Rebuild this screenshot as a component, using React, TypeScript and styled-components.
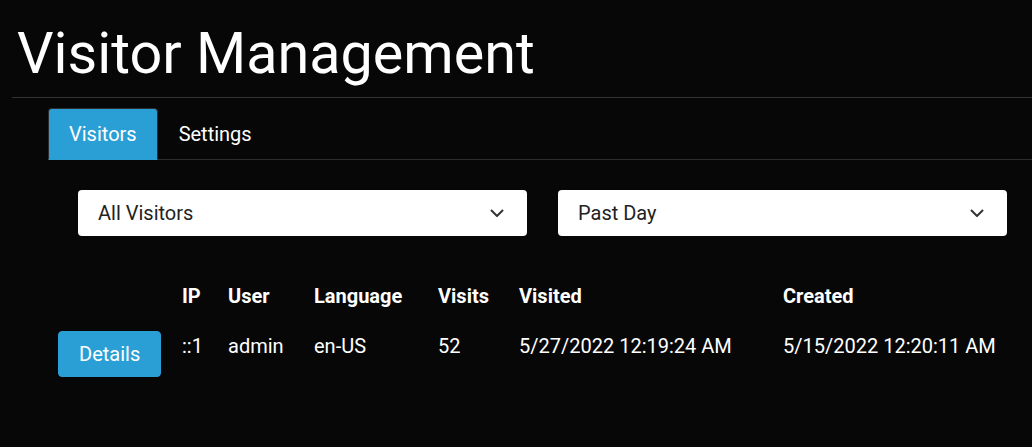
import React from "react";
import styled, { createGlobalStyle } from "styled-components";

const Global = createGlobalStyle`
  html, body { margin: 0; padding: 0; background: #070707; }
  body { font-family: Roboto, "Liberation Sans", sans-serif; color: #fff; font-size: 20px; line-height: 1.5; }
  * { box-sizing: border-box; }
`;

const Page = styled.div`
  padding-left: 12px;
  min-height: 447px;
`;

const Header = styled.header`
  border-bottom: 1px solid #333;
  padding: 19px 0 8px 5px;
`;

const Title = styled.h1`
  margin: 0;
  font-size: 57.5px;
  font-weight: 400;
  line-height: 70px;
  color: #fff;
`;

const Body = styled.div`
  padding-top: 10px;
  padding-left: 36px;
`;

const Tabs = styled.ul`
  display: flex;
  list-style: none;
  margin: 0;
  padding: 0;
  border-bottom: 1px solid #2c2c2c;
`;

const Tab = styled.li<{ $active?: boolean }>`
  margin-bottom: -1px;
  padding: 10px 20px;
  line-height: 30px;
  font-size: 20px;
  color: #fff;
  border: 1px solid ${(p) => (p.$active ? "#2c2c2c" : "transparent")};
  border-bottom-color: ${(p) => (p.$active ? "#2a9fd6" : "transparent")};
  border-radius: 4px 4px 0 0;
  background: ${(p) => (p.$active ? "#2a9fd6" : "transparent")};
  cursor: pointer;
`;

const Filters = styled.div`
  display: flex;
  gap: 31px;
  margin: 30px 0 0 30px;
`;

const Select = styled.div`
  width: 449px;
  height: 46px;
  background: #fff;
  border-radius: 4px;
  display: flex;
  align-items: center;
  justify-content: space-between;
  padding: 0 22px 0 20px;
  color: #222;
  font-size: 20px;
`;

const Chevron = () => (
  <svg width="16" height="16" viewBox="0 0 16 16" fill="none">
    <path d="M2.5 5.5L8 11l5.5-5.5" stroke="#333" strokeWidth="2" strokeLinecap="round" strokeLinejoin="round" />
  </svg>
);

const Table = styled.table`
  margin-top: 35px;
  border-collapse: collapse;
  table-layout: fixed;
  width: 984px;
  vertical-align: top;
`;

const Th = styled.th`
  text-align: left;
  font-weight: 700;
  padding: 10px;
  line-height: 30px;
  font-size: 20px;
`;

const Td = styled.td`
  padding: 10px;
  line-height: 30px;
  font-size: 20px;
  vertical-align: top;
  white-space: nowrap;
`;

const Button = styled.button`
  font-family: inherit;
  font-size: 20px;
  line-height: 30px;
  color: #fff;
  background: #2a9fd6;
  border: 1px solid #2a9fd6;
  border-radius: 4px;
  padding: 7px 20px;
  cursor: pointer;
`;

const widths = [124, 46, 86, 124, 81, 264, 259];

export default function App() {
  return (
    <>
      <Global />
      <Page>
        <Header>
          <Title>Visitor Management</Title>
        </Header>
        <Body>
          <Tabs>
            <Tab $active>Visitors</Tab>
            <Tab>Settings</Tab>
          </Tabs>
          <Filters>
            <Select>
              <span>All Visitors</span>
              <Chevron />
            </Select>
            <Select>
              <span>Past Day</span>
              <Chevron />
            </Select>
          </Filters>
          <Table>
            <colgroup>
              {widths.map((w, i) => (
                <col key={i} style={{ width: w }} />
              ))}
            </colgroup>
            <thead>
              <tr>
                <Th></Th>
                <Th>IP</Th>
                <Th>User</Th>
                <Th>Language</Th>
                <Th>Visits</Th>
                <Th>Visited</Th>
                <Th>Created</Th>
              </tr>
            </thead>
            <tbody>
              <tr>
                <Td>
                  <Button>Details</Button>
                </Td>
                <Td>::1</Td>
                <Td>admin</Td>
                <Td>en-US</Td>
                <Td>52</Td>
                <Td>5/27/2022 12:19:24 AM</Td>
                <Td>5/15/2022 12:20:11 AM</Td>
              </tr>
            </tbody>
          </Table>
        </Body>
      </Page>
    </>
  );
}
